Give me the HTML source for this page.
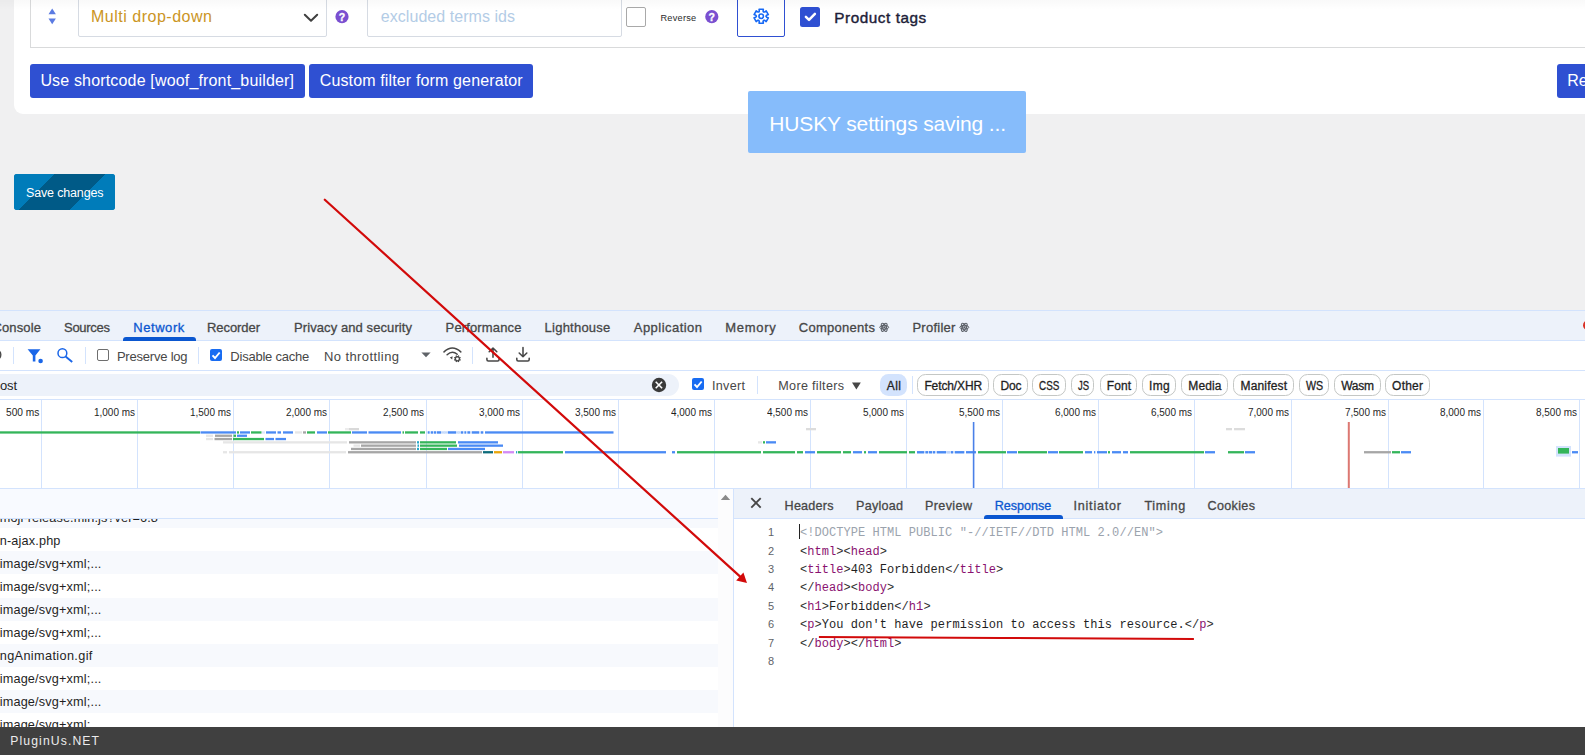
<!DOCTYPE html>
<html lang="en"><head><meta charset="utf-8"><title>HUSKY settings - DevTools</title>
<style>
*{box-sizing:border-box;margin:0;padding:0}
html,body{width:1585px;height:755px;overflow:hidden;background:#f0f0f1;font-family:"Liberation Sans",sans-serif}
#root{position:relative;width:1585px;height:755px;overflow:hidden;background:#f0f0f1}
.a{position:absolute}
.t{position:absolute;white-space:pre;display:block}
.card{left:14px;top:-20px;width:1600px;height:134px;background:#fff;border-radius:0 0 0 9px}
.ibox{left:30px;top:-20px;width:1600px;height:68px;border:1px solid #d9dadb;background:#fff}
.sel{left:78px;top:-10px;width:249px;height:47px;border:1px solid #d6dbe3;border-radius:2px;background:#fff}
.inp{left:367px;top:-10px;width:255px;height:47px;border:1px solid #d6dbe3;border-radius:2px;background:#fff}
.cb0{left:626px;top:7px;width:20px;height:20px;border:1px solid #a9a9a9;border-radius:2px;background:#fff}
.gearb{left:737px;top:-10px;width:48px;height:47px;border:1px solid #2f50d2;border-radius:2px;background:#fff}
.cb1{left:800px;top:7px;width:20px;height:20px;border-radius:2.5px;background:#2f50d2}
.btn{background:#2f50d2;border-radius:3px;top:64px;height:34px}
.toast{left:748px;top:91px;width:278px;height:62px;background:#86bcfb;border-radius:2px}
.save{left:14px;top:174px;width:101px;height:36px;border-radius:3px;overflow:hidden;background:#007cba}
/* devtools */
.dt{left:0;top:310px;width:1585px;height:417px;background:#fff}
.hl{background:#d3e3fd;height:1px;left:0;width:1585px}
.vl{background:#d3e3fd;width:1px}
.tabbar{left:0;top:311px;width:1585px;height:29px;background:#edf2fa}
.frow{left:-12px;top:374px;width:691px;height:22px;background:#edf2fa;border-radius:11px}
.pill{top:374.2px;height:21.6px;border:1px solid #c4c7c5;border-radius:8.5px;background:#fff}
.pillall{left:880.2px;top:374.2px;width:26.5px;height:21.6px;border-radius:8.5px;background:#d3e3fd}
.dcb{width:12px;height:12px;border-radius:2px}
.dcb.off{border:1px solid #6e6e6e;background:#fff}
.dcb.on{background:#186cf2}
.row{left:0;width:718px;height:23px}
.alt{background:#f7f9fd}
.bottom{left:0;top:727px;width:1585px;height:28px;background:#404040;z-index:8}
svg{position:absolute;overflow:visible}

</style></head>
<body>
<div id="root">
<!-- ===== page ===== -->
<div class="a card"></div>
<div class="a ibox"></div>
<div class="a sel"></div>
<div class="a inp"></div>
<div class="a cb0"></div>
<div class="a gearb"></div>
<div class="a cb1"></div>
<div class="a btn" style="left:30px;width:275px"></div>
<div class="a btn" style="left:309px;width:224px"></div>
<div class="a btn" style="left:1557px;width:40px"></div>
<div class="a" style="left:0;top:0;width:1585px;height:10px;background:linear-gradient(to bottom,rgba(0,0,0,.024),rgba(0,0,0,0))"></div>
<div class="a toast"></div>
<div class="a save"><div class="a" style="left:-14px;top:-4px;width:130px;height:44px;background:linear-gradient(135deg,#007cba 0,#007cba 33.4%,#005a87 33.4%,#005a87 63%,#007cba 63%)"></div></div>
<svg class="a" style="left:0;top:0" width="1585" height="120" viewBox="0 0 1585 120">
  <!-- sort arrows -->
  <path d="M48.5 14.2 L52.2 8.5 L55.9 14.2 Z" fill="#5b7be2"/>
  <path d="M48.5 18.4 L52.2 24.2 L55.9 18.4 Z" fill="#5b7be2"/>
  <!-- select chevron -->
  <path d="M304.8 14.7 L311 20.8 L317.2 14.7" fill="none" stroke="#404040" stroke-width="2" stroke-linecap="round" stroke-linejoin="round"/>
  <!-- help icons -->
  <g id="q1"><circle cx="342" cy="16.7" r="6.6" fill="#7a4fd0"/><text x="342" y="20.6" font-family="Liberation Sans, sans-serif" font-weight="700" font-size="10.5" fill="#fff" stroke="#fff" stroke-width=".35" text-anchor="middle">?</text></g>
  <g id="q2"><circle cx="711.8" cy="16.7" r="6.6" fill="#7a4fd0"/><text x="711.8" y="20.6" font-family="Liberation Sans, sans-serif" font-weight="700" font-size="10.5" fill="#fff" stroke="#fff" stroke-width=".35" text-anchor="middle">?</text></g>
  <!-- gear -->
  <g fill="none" stroke="#1668f5" stroke-width="1.6" stroke-linejoin="round">
    <circle cx="761.2" cy="16.2" r="2.25"/>
    <path d="M763.60 12.04 L763.08 11.03 L763.33 9.22 L759.07 9.22 L759.32 11.03 L758.80 12.04 L757.66 11.99 L756.22 10.86 L754.09 14.56 L755.78 15.24 L756.40 16.20 L755.78 17.16 L754.09 17.84 L756.22 21.54 L757.66 20.41 L758.80 20.36 L759.32 21.37 L759.07 23.18 L763.33 23.18 L763.08 21.37 L763.60 20.36 L764.74 20.41 L766.18 21.54 L768.31 17.84 L766.62 17.16 L766.00 16.20 L766.62 15.24 L768.31 14.56 L766.18 10.86 L764.74 11.99 Z"/>
  </g>
  <!-- check -->
  <path d="M805.9 16.9 L809 19.9 L814.9 13.9" fill="none" stroke="#fff" stroke-width="2.5" stroke-linecap="round" stroke-linejoin="round"/>
</svg>

<!-- ===== devtools ===== -->
<div class="a dt"></div>
<div class="a hl" style="top:310px"></div>
<div class="a tabbar"></div>
<div class="a hl" style="top:340px"></div>
<div class="a" style="left:123px;top:337px;width:73px;height:3.6px;background:#0b57d0;border-radius:3px 3px 0 0"></div>
<div class="a hl" style="top:370px"></div>
<div class="a frow"></div>
<div class="a hl" style="top:398.6px"></div>
<!-- toolbar separators -->
<div class="a vl" style="left:13px;top:347px;height:17px"></div>
<div class="a vl" style="left:85px;top:347px;height:17px"></div>
<div class="a vl" style="left:198px;top:347px;height:17px"></div>
<div class="a vl" style="left:472px;top:347px;height:17px"></div>
<div class="a vl" style="left:757px;top:376px;height:18px"></div>
<div class="a vl" style="left:912px;top:376px;height:18px"></div>
<div class="a dcb off" style="left:97.3px;top:349.3px"></div>
<div class="a dcb on" style="left:210px;top:349.3px"></div>
<div class="a dcb on" style="left:692px;top:378.3px"></div>
<div class="a pillall"></div>
<div class="a pill" style="left:916.8px;width:71.9px"></div>
<div class="a pill" style="left:993.3px;width:34.3px"></div>
<div class="a pill" style="left:1032.2px;width:33.5px"></div>
<div class="a pill" style="left:1071.4px;width:22.9px"></div>
<div class="a pill" style="left:1100.2px;width:37.2px"></div>
<div class="a pill" style="left:1142.1px;width:34.4px"></div>
<div class="a pill" style="left:1181.2px;width:47.2px"></div>
<div class="a pill" style="left:1233.3px;width:60.4px"></div>
<div class="a pill" style="left:1299.2px;width:29.9px"></div>
<div class="a pill" style="left:1334px;width:46.7px"></div>
<div class="a pill" style="left:1385.2px;width:44.6px"></div>

<svg class="a" style="left:0;top:300px" width="1585" height="120" viewBox="0 300 1585 120">
  <!-- partial clear icon -->
  <circle cx="-4.6" cy="354.7" r="5.4" fill="none" stroke="#474747" stroke-width="1.4"/>
  <!-- filter funnel -->
  <path d="M27.6 349.2 H40.4 L35.4 355.6 V361.4 H32.8 V355.6 Z" fill="#1a66e8"/>
  <circle cx="40.6" cy="361" r="2.3" fill="#1a66e8"/>
  <!-- search -->
  <circle cx="62.4" cy="353.2" r="4.4" fill="none" stroke="#1a66e8" stroke-width="1.5"/>
  <path d="M65.6 356.5 L72.2 362" stroke="#1a66e8" stroke-width="1.9" fill="none"/>
  <!-- checks -->
  <path d="M212.5 355.4 L215 358 L219.7 352.5" fill="none" stroke="#fff" stroke-width="1.9"/>
  <path d="M694.5 384.4 L697 387 L701.7 381.5" fill="none" stroke="#fff" stroke-width="1.9"/>
  <!-- dropdown arrow -->
  <path d="M421.4 352.6 H430.6 L426 357.3 Z" fill="#5f6368"/>
  <!-- wifi gear -->
  <g fill="none" stroke="#474747" stroke-width="1.5" stroke-linecap="round">
    <path d="M444 351.9 Q452.3 344 460.8 351.9"/>
    <path d="M447.1 354.8 Q452.2 349.8 457.2 354.3"/>
  </g>
  <path d="M449.8 357.4 L452.6 356.2 L452.2 359.6 Z" fill="#474747"/>
  <circle cx="457.4" cy="358.8" r="2.05" fill="none" stroke="#474747" stroke-width="1.3"/>
  <path d="M459.43 359.64 L460.63 360.14 M458.24 360.83 L458.74 362.03 M456.56 360.83 L456.06 362.03 M455.37 359.64 L454.17 360.14 M455.37 357.96 L454.17 357.46 M456.56 356.77 L456.06 355.57 M458.24 356.77 L458.74 355.57 M459.43 357.96 L460.63 357.46 " stroke="#474747" stroke-width="1.25" fill="none"/>
  <!-- upload / download -->
  <g fill="none" stroke="#474747" stroke-width="1.55" stroke-linecap="round" stroke-linejoin="round">
    <path d="M493 357.2 V348 M489.2 351.8 L493 348 L496.8 351.8"/>
    <path d="M486.9 358.3 V359.6 Q486.9 361 488.3 361 H497.7 Q499.1 361 499.1 359.6 V358.3"/>
    <path d="M523 347.6 V356.8 M519.2 353 L523 356.8 L526.8 353"/>
    <path d="M516.8 358.3 V359.6 Q516.8 361 518.2 361 H527.8 Q529.2 361 529.2 359.6 V358.3"/>
  </g>
  <!-- clear filter -->
  <circle cx="659" cy="385" r="7.2" fill="#3a3a3a"/>
  <path d="M655.7 381.8 L662.1 388.2 M662.1 381.8 L655.7 388.2" stroke="#fff" stroke-width="1.6"/>
  <!-- more filters arrow -->
  <path d="M852 382.6 H860.8 L856.4 389.4 Z" fill="#474747"/>
  <!-- react icons -->
  <g fill="none" stroke="#5a5f66" stroke-width="1">
    <g transform="translate(884.2,327.3)"><circle r="4.2" fill="#c9ced8" stroke="none" opacity=".55"/><ellipse rx="4.5" ry="1.9"/><ellipse rx="4.5" ry="1.9" transform="rotate(60)"/><ellipse rx="4.5" ry="1.9" transform="rotate(120)"/><circle r="1" fill="#5a5f66" stroke="none"/></g>
    <g transform="translate(964.3,327.3)"><circle r="4.2" fill="#c9ced8" stroke="none" opacity=".55"/><ellipse rx="4.5" ry="1.9"/><ellipse rx="4.5" ry="1.9" transform="rotate(60)"/><ellipse rx="4.5" ry="1.9" transform="rotate(120)"/><circle r="1" fill="#5a5f66" stroke="none"/></g>
  </g>
  <!-- red error partial -->
  <circle cx="1588" cy="325.2" r="5" fill="#d93025"/>
</svg>

<!-- timeline overview -->
<div class="a" style="left:0;top:399.6px;width:1585px;height:88.4px;background:#fff"></div>
<div class="a vl" style="left:41px;top:399.6px;height:88.4px"></div>
<div class="a vl" style="left:137px;top:399.6px;height:88.4px"></div>
<div class="a vl" style="left:233px;top:399.6px;height:88.4px"></div>
<div class="a vl" style="left:329px;top:399.6px;height:88.4px"></div>
<div class="a vl" style="left:426px;top:399.6px;height:88.4px"></div>
<div class="a vl" style="left:522px;top:399.6px;height:88.4px"></div>
<div class="a vl" style="left:618px;top:399.6px;height:88.4px"></div>
<div class="a vl" style="left:714px;top:399.6px;height:88.4px"></div>
<div class="a vl" style="left:810px;top:399.6px;height:88.4px"></div>
<div class="a vl" style="left:906px;top:399.6px;height:88.4px"></div>
<div class="a vl" style="left:1002px;top:399.6px;height:88.4px"></div>
<div class="a vl" style="left:1098px;top:399.6px;height:88.4px"></div>
<div class="a vl" style="left:1194px;top:399.6px;height:88.4px"></div>
<div class="a vl" style="left:1291px;top:399.6px;height:88.4px"></div>
<div class="a vl" style="left:1388px;top:399.6px;height:88.4px"></div>
<div class="a vl" style="left:1483px;top:399.6px;height:88.4px"></div>
<div class="a vl" style="left:1579px;top:399.6px;height:88.4px"></div>
<div class="a hl" style="top:488px"></div>
<svg class="a" style="left:0;top:399px" width="1585" height="90" viewBox="0 399 1585 90" shape-rendering="auto">
<rect x="345" y="428.0" width="4.0" height="2.3" fill="#ececec"/><rect x="349" y="428.0" width="10.0" height="2.3" fill="#d9d9d9"/><rect x="806" y="428.0" width="10.0" height="2.3" fill="#dcdcdc"/><rect x="1226" y="428.0" width="6.0" height="2.3" fill="#dcdcdc"/><rect x="1234" y="428.0" width="11.0" height="2.3" fill="#dcdcdc"/><rect x="426" y="431.3" width="58.0" height="2.3" fill="#c4d9fb"/><rect x="-2" y="431.3" width="202.0" height="2.3" fill="#34b55a"/><rect x="200.5" y="431.3" width="35.5" height="2.3" fill="#4a8af4"/><rect x="237" y="431.3" width="2.0" height="2.3" fill="#34b55a"/><rect x="240" y="431.3" width="10.0" height="2.3" fill="#4a8af4"/><rect x="251" y="431.3" width="10.5" height="2.3" fill="#34b55a"/><rect x="262" y="431.3" width="3.0" height="2.3" fill="#dfe8fb"/><rect x="266" y="431.3" width="10.0" height="2.3" fill="#4a8af4"/><rect x="277.5" y="431.3" width="3.5" height="2.3" fill="#4a8af4"/><rect x="283" y="431.3" width="10.0" height="2.3" fill="#4a8af4"/><rect x="295" y="431.3" width="7.0" height="2.3" fill="#e6e6e6"/><rect x="303" y="431.3" width="3.0" height="2.3" fill="#a6a6a6"/><rect x="307" y="431.3" width="8.0" height="2.3" fill="#34b55a"/><rect x="317" y="431.3" width="10.0" height="2.3" fill="#4a8af4"/><rect x="328" y="431.3" width="23.0" height="2.3" fill="#34b55a"/><rect x="352" y="431.3" width="15.0" height="2.3" fill="#4a8af4"/><rect x="368.5" y="431.3" width="32.5" height="2.3" fill="#4a8af4"/><rect x="402.5" y="431.3" width="1.5" height="2.3" fill="#34b55a"/><rect x="405" y="431.3" width="13.0" height="2.3" fill="#34b55a"/><rect x="420" y="431.3" width="5.0" height="2.3" fill="#34b55a"/><rect x="428" y="431.3" width="1.5" height="2.3" fill="#4a8af4"/><rect x="431" y="431.3" width="2.0" height="2.3" fill="#4a8af4"/><rect x="434" y="431.3" width="2.0" height="2.3" fill="#4a8af4"/><rect x="437" y="431.3" width="4.0" height="2.3" fill="#4a8af4"/><rect x="444" y="431.3" width="1.0" height="2.3" fill="#cfe0fb"/><rect x="448" y="431.3" width="8.0" height="2.3" fill="#4a8af4"/><rect x="458" y="431.3" width="1.0" height="2.3" fill="#cfe0fb"/><rect x="461" y="431.3" width="2.0" height="2.3" fill="#4a8af4"/><rect x="464.5" y="431.3" width="1.5" height="2.3" fill="#4a8af4"/><rect x="467.5" y="431.3" width="2.5" height="2.3" fill="#4a8af4"/><rect x="472" y="431.3" width="7.0" height="2.3" fill="#4a8af4"/><rect x="481" y="431.3" width="2.0" height="2.3" fill="#4a8af4"/><rect x="485" y="431.3" width="128.5" height="2.3" fill="#4a8af4"/><rect x="206" y="434.6" width="7.0" height="2.3" fill="#e6e6e6"/><rect x="215" y="434.6" width="17.0" height="2.3" fill="#a6a6a6"/><rect x="233.5" y="434.6" width="2.5" height="2.3" fill="#34b55a"/><rect x="237" y="434.6" width="10.0" height="2.3" fill="#4a8af4"/><rect x="206" y="437.9" width="7.0" height="2.3" fill="#e6e6e6"/><rect x="214.5" y="437.9" width="17.5" height="2.3" fill="#a6a6a6"/><rect x="233" y="437.9" width="31.0" height="2.3" fill="#34b55a"/><rect x="265.5" y="437.9" width="8.5" height="2.3" fill="#4a8af4"/><rect x="275.5" y="437.9" width="10.5" height="2.3" fill="#4a8af4"/><rect x="223" y="441.2" width="124.0" height="2.3" fill="#e6e6e6"/><rect x="349" y="441.2" width="67.0" height="2.3" fill="#a6a6a6"/><rect x="417" y="441.2" width="2.0" height="2.3" fill="#25a7c9"/><rect x="420" y="441.2" width="36.0" height="2.3" fill="#34b55a"/><rect x="458" y="441.2" width="40.0" height="2.3" fill="#4a8af4"/><rect x="758" y="441.2" width="4.0" height="2.3" fill="#e6e6e6"/><rect x="763" y="441.2" width="2.0" height="2.3" fill="#34b55a"/><rect x="766" y="441.2" width="10.0" height="2.3" fill="#4a8af4"/><rect x="353.5" y="444.5" width="6.5" height="2.3" fill="#e6e6e6"/><rect x="361" y="444.5" width="55.0" height="2.3" fill="#a6a6a6"/><rect x="417.5" y="444.5" width="1.5" height="2.3" fill="#25a7c9"/><rect x="420" y="444.5" width="37.0" height="2.3" fill="#34b55a"/><rect x="459" y="444.5" width="44.0" height="2.3" fill="#4a8af4"/><rect x="351" y="447.8" width="65.0" height="2.3" fill="#a6a6a6"/><rect x="417" y="447.8" width="2.0" height="2.3" fill="#25a7c9"/><rect x="420" y="447.8" width="27.0" height="2.3" fill="#34b55a"/><rect x="448" y="447.8" width="37.0" height="2.3" fill="#4a8af4"/><rect x="917" y="451.1" width="48.0" height="2.3" fill="#c4d9fb"/><rect x="223" y="451.1" width="4.0" height="2.3" fill="#e6e6e6"/><rect x="229" y="451.1" width="117.0" height="2.3" fill="#e6e6e6"/><rect x="348" y="451.1" width="134.0" height="2.3" fill="#a6a6a6"/><rect x="483" y="451.1" width="10.0" height="2.3" fill="#0d6b7a"/><rect x="494" y="451.1" width="8.0" height="2.3" fill="#e8a60c"/><rect x="503" y="451.1" width="11.0" height="2.3" fill="#d38af5"/><rect x="516" y="451.1" width="1.2" height="2.3" fill="#25a7c9"/><rect x="518" y="451.1" width="45.0" height="2.3" fill="#34b55a"/><rect x="565" y="451.1" width="101.0" height="2.3" fill="#4a8af4"/><rect x="672" y="451.1" width="3.0" height="2.3" fill="#4a8af4"/><rect x="677" y="451.1" width="84.0" height="2.3" fill="#34b55a"/><rect x="763" y="451.1" width="32.0" height="2.3" fill="#34b55a"/><rect x="797" y="451.1" width="6.0" height="2.3" fill="#34b55a"/><rect x="805" y="451.1" width="10.0" height="2.3" fill="#4a8af4"/><rect x="817" y="451.1" width="24.0" height="2.3" fill="#34b55a"/><rect x="843" y="451.1" width="8.0" height="2.3" fill="#34b55a"/><rect x="853" y="451.1" width="9.0" height="2.3" fill="#4a8af4"/><rect x="864" y="451.1" width="2.0" height="2.3" fill="#34b55a"/><rect x="868" y="451.1" width="9.0" height="2.3" fill="#4a8af4"/><rect x="879" y="451.1" width="28.0" height="2.3" fill="#34b55a"/><rect x="909" y="451.1" width="6.0" height="2.3" fill="#34b55a"/><rect x="917" y="451.1" width="7.0" height="2.3" fill="#4a8af4"/><rect x="925.5" y="451.1" width="2.5" height="2.3" fill="#4a8af4"/><rect x="929" y="451.1" width="3.0" height="2.3" fill="#4a8af4"/><rect x="933" y="451.1" width="2.0" height="2.3" fill="#4a8af4"/><rect x="937" y="451.1" width="9.0" height="2.3" fill="#4a8af4"/><rect x="947" y="451.1" width="3.0" height="2.3" fill="#bcd3fb"/><rect x="951" y="451.1" width="2.0" height="2.3" fill="#4a8af4"/><rect x="955" y="451.1" width="9.0" height="2.3" fill="#4a8af4"/><rect x="966" y="451.1" width="10.0" height="2.3" fill="#4a8af4"/><rect x="978" y="451.1" width="28.0" height="2.3" fill="#34b55a"/><rect x="1007" y="451.1" width="10.0" height="2.3" fill="#4a8af4"/><rect x="1018" y="451.1" width="29.0" height="2.3" fill="#34b55a"/><rect x="1048" y="451.1" width="10.0" height="2.3" fill="#4a8af4"/><rect x="1059" y="451.1" width="24.0" height="2.3" fill="#34b55a"/><rect x="1085" y="451.1" width="7.0" height="2.3" fill="#4a8af4"/><rect x="1094" y="451.1" width="1.3" height="2.3" fill="#4a8af4"/><rect x="1097" y="451.1" width="10.0" height="2.3" fill="#4a8af4"/><rect x="1108" y="451.1" width="2.0" height="2.3" fill="#34b55a"/><rect x="1112" y="451.1" width="9.0" height="2.3" fill="#4a8af4"/><rect x="1123" y="451.1" width="5.0" height="2.3" fill="#4a8af4"/><rect x="1130" y="451.1" width="74.0" height="2.3" fill="#34b55a"/><rect x="1205" y="451.1" width="10.0" height="2.3" fill="#4a8af4"/><rect x="1228" y="451.1" width="16.0" height="2.3" fill="#34b55a"/><rect x="1245" y="451.1" width="10.0" height="2.3" fill="#4a8af4"/><rect x="1364" y="451.1" width="27.0" height="2.3" fill="#a6a6a6"/><rect x="1392" y="451.1" width="8.0" height="2.3" fill="#34b55a"/><rect x="1401" y="451.1" width="10.0" height="2.3" fill="#4a8af4"/><rect x="1572" y="451.1" width="6.0" height="2.3" fill="#4a8af4"/>
<rect x="1556" y="446" width="15" height="10.6" fill="#d3e3fd"/><rect x="1558" y="448" width="11" height="5.6" fill="#34b55a"/>
<rect x="972.8" y="422" width="1.6" height="66" fill="#4a80e8"/><rect x="1347.8" y="422" width="2" height="66" fill="#dc7872"/>
</svg>


<!-- request list -->
<div class="a" style="left:0;top:489px;width:733px;height:238px;background:#fff"></div>
<div class="a row alt" style="top:505.2px;height:23.1px"></div>
<div class="a row alt" style="top:551.4px;height:23.1px"></div>
<div class="a row alt" style="top:597.6px;height:23.1px"></div>
<div class="a row alt" style="top:643.8px;height:23.1px"></div>
<div class="a row alt" style="top:690.0px;height:23.1px"></div>


<div class="a" style="left:0;top:489px;width:718px;height:29px;background:#f8faff;z-index:6"></div>
<div class="a" style="left:718px;top:489px;width:15px;height:238px;background:#fcfcfd;z-index:6"></div>
<div class="a hl" style="top:518px;width:718px;z-index:6"></div>
<svg class="a" style="left:718px;top:489px;z-index:6" width="15" height="20"><path d="M2.8 11 L7.5 5.8 L12.2 11 Z" fill="#8a8a8a"/></svg>
<!-- response panel -->
<div class="a" style="left:734px;top:489px;width:851px;height:29px;background:#edf2fa"></div>
<div class="a hl" style="top:518px;left:734px;width:851px"></div>
<div class="a vl" style="left:733px;top:489px;height:238px"></div>
<div class="a" style="left:983.5px;top:515px;width:79px;height:3.6px;background:#0b57d0;border-radius:3px 3px 0 0"></div>
<svg class="a" style="left:740px;top:490px" width="40" height="30"><path d="M11.3 8.2 L20.7 17.6 M20.7 8.2 L11.3 17.6" stroke="#474747" stroke-width="1.9" fill="none"/></svg>
<div class="a" style="left:799px;top:524px;width:1px;height:15px;background:#222"></div>

<span class="t" style="left:91.00px;top:5.20px;font:400 16px/23px 'Liberation Sans', sans-serif;color:#cb9524;letter-spacing:0.512px;">Multi drop-down</span>
<span class="t" style="left:380.80px;top:5.20px;font:400 16px/23px 'Liberation Sans', sans-serif;color:#b3cce6;letter-spacing:0.048px;">excluded terms ids</span>
<span class="t" style="left:660.40px;top:11.00px;font:400 9.2px/14px 'Liberation Sans', sans-serif;color:#2b2b2b;letter-spacing:0.264px;">Reverse</span>
<span class="t" style="left:834.30px;top:7.00px;font:400 15.3px/22px 'Liberation Sans', sans-serif;color:#1d1d38;letter-spacing:0.546px;-webkit-text-stroke:.4px #1d1d38;">Product tags</span>
<span class="t" style="left:40.40px;top:69.00px;font:400 16px/23px 'Liberation Sans', sans-serif;color:#fff;letter-spacing:0.165px;">Use shortcode [woof_front_builder]</span>
<span class="t" style="left:319.70px;top:69.00px;font:400 16px/23px 'Liberation Sans', sans-serif;color:#fff;letter-spacing:0.141px;">Custom filter form generator</span>
<span class="t" style="left:1567.30px;top:69.00px;font:400 16px/23px 'Liberation Sans', sans-serif;color:#fff;">Re</span>
<span class="t" style="left:769.30px;top:109.00px;font:400 21px/29px 'Liberation Sans', sans-serif;color:#fff;letter-spacing:-0.140px;">HUSKY settings saving ...</span>
<span class="t" style="left:26.00px;top:183.60px;font:400 12.5px/18px 'Liberation Sans', sans-serif;color:#fff;letter-spacing:-0.158px;">Save changes</span>
<span class="t" style="left:-7.60px;top:318.10px;font:400 13px/19px 'Liberation Sans', sans-serif;color:#474747;letter-spacing:0.149px;-webkit-text-stroke:.3px currentColor;">Console</span>
<span class="t" style="left:64.00px;top:318.10px;font:400 13px/19px 'Liberation Sans', sans-serif;color:#474747;letter-spacing:-0.284px;-webkit-text-stroke:.3px currentColor;">Sources</span>
<span class="t" style="left:133.30px;top:318.10px;font:400 13px/19px 'Liberation Sans', sans-serif;color:#0b57d0;letter-spacing:0.552px;-webkit-text-stroke:.3px currentColor;">Network</span>
<span class="t" style="left:207.00px;top:318.10px;font:400 13px/19px 'Liberation Sans', sans-serif;color:#474747;letter-spacing:-0.067px;-webkit-text-stroke:.3px currentColor;">Recorder</span>
<span class="t" style="left:294.00px;top:318.10px;font:400 13px/19px 'Liberation Sans', sans-serif;color:#474747;letter-spacing:0.088px;-webkit-text-stroke:.3px currentColor;">Privacy and security</span>
<span class="t" style="left:445.60px;top:318.10px;font:400 13px/19px 'Liberation Sans', sans-serif;color:#474747;letter-spacing:0.138px;-webkit-text-stroke:.3px currentColor;">Performance</span>
<span class="t" style="left:544.60px;top:318.10px;font:400 13px/19px 'Liberation Sans', sans-serif;color:#474747;letter-spacing:0.231px;-webkit-text-stroke:.3px currentColor;">Lighthouse</span>
<span class="t" style="left:633.80px;top:318.10px;font:400 13px/19px 'Liberation Sans', sans-serif;color:#474747;letter-spacing:0.459px;-webkit-text-stroke:.3px currentColor;">Application</span>
<span class="t" style="left:725.30px;top:318.10px;font:400 13px/19px 'Liberation Sans', sans-serif;color:#474747;letter-spacing:0.709px;-webkit-text-stroke:.3px currentColor;">Memory</span>
<span class="t" style="left:798.80px;top:318.10px;font:400 13px/19px 'Liberation Sans', sans-serif;color:#474747;letter-spacing:0.276px;-webkit-text-stroke:.3px currentColor;">Components</span>
<span class="t" style="left:912.40px;top:318.10px;font:400 13px/19px 'Liberation Sans', sans-serif;color:#474747;letter-spacing:0.259px;-webkit-text-stroke:.3px currentColor;">Profiler</span>
<span class="t" style="left:116.90px;top:347.00px;font:400 13px/19px 'Liberation Sans', sans-serif;color:#474747;letter-spacing:-0.208px;">Preserve log</span>
<span class="t" style="left:230.30px;top:347.00px;font:400 13px/19px 'Liberation Sans', sans-serif;color:#474747;letter-spacing:-0.221px;">Disable cache</span>
<span class="t" style="left:324.00px;top:347.00px;font:400 13px/19px 'Liberation Sans', sans-serif;color:#474747;letter-spacing:0.409px;">No throttling</span>
<span class="t" style="left:0.00px;top:375.60px;font:400 13px/19px 'Liberation Sans', sans-serif;color:#1f1f1f;letter-spacing:-0.172px;">ost</span>
<span class="t" style="left:712.00px;top:377.00px;font:400 12.6px/18px 'Liberation Sans', sans-serif;color:#474747;letter-spacing:0.300px;">Invert</span>
<span class="t" style="left:778.30px;top:377.00px;font:400 12.6px/18px 'Liberation Sans', sans-serif;color:#474747;letter-spacing:0.311px;">More filters</span>
<span class="t" style="left:886.80px;top:377.00px;font:400 12px/18px 'Liberation Sans', sans-serif;color:#1f1f1f;letter-spacing:0.378px;-webkit-text-stroke:.3px currentColor;">All</span>
<span class="t" style="left:924.40px;top:377.00px;font:400 12px/18px 'Liberation Sans', sans-serif;color:#1f1f1f;letter-spacing:-0.111px;-webkit-text-stroke:.3px currentColor;">Fetch/XHR</span>
<span class="t" style="left:1000.40px;top:377.00px;font:400 12px/18px 'Liberation Sans', sans-serif;color:#1f1f1f;letter-spacing:-0.172px;-webkit-text-stroke:.3px currentColor;">Doc</span>
<span class="t" style="left:1039.20px;top:377.00px;font:400 12px/18px 'Liberation Sans', sans-serif;color:#1f1f1f;letter-spacing:0.000px;-webkit-text-stroke:.3px currentColor;transform:scaleX(0.8223);transform-origin:0 0;">CSS</span>
<span class="t" style="left:1077.60px;top:377.00px;font:400 12px/18px 'Liberation Sans', sans-serif;color:#1f1f1f;letter-spacing:0.000px;-webkit-text-stroke:.3px currentColor;transform:scaleX(0.7920);transform-origin:0 0;">JS</span>
<span class="t" style="left:1106.70px;top:377.00px;font:400 12px/18px 'Liberation Sans', sans-serif;color:#1f1f1f;letter-spacing:0.128px;-webkit-text-stroke:.3px currentColor;">Font</span>
<span class="t" style="left:1149.00px;top:377.00px;font:400 12px/18px 'Liberation Sans', sans-serif;color:#1f1f1f;letter-spacing:0.342px;-webkit-text-stroke:.3px currentColor;">Img</span>
<span class="t" style="left:1188.30px;top:377.00px;font:400 12px/18px 'Liberation Sans', sans-serif;color:#1f1f1f;letter-spacing:0.128px;-webkit-text-stroke:.3px currentColor;">Media</span>
<span class="t" style="left:1240.50px;top:377.00px;font:400 12px/18px 'Liberation Sans', sans-serif;color:#1f1f1f;letter-spacing:0.163px;-webkit-text-stroke:.3px currentColor;">Manifest</span>
<span class="t" style="left:1306.00px;top:377.00px;font:400 12px/18px 'Liberation Sans', sans-serif;color:#1f1f1f;letter-spacing:0.000px;-webkit-text-stroke:.3px currentColor;transform:scaleX(0.8892);transform-origin:0 0;">WS</span>
<span class="t" style="left:1341.20px;top:377.00px;font:400 12px/18px 'Liberation Sans', sans-serif;color:#1f1f1f;letter-spacing:-0.221px;-webkit-text-stroke:.3px currentColor;">Wasm</span>
<span class="t" style="left:1392.10px;top:377.00px;font:400 12px/18px 'Liberation Sans', sans-serif;color:#1f1f1f;letter-spacing:0.221px;-webkit-text-stroke:.3px currentColor;">Other</span>
<span class="t" style="left:5.70px;top:404.00px;font:400 11.3px/17px 'Liberation Sans', sans-serif;color:#1f1f1f;letter-spacing:0.000px;transform:scaleX(0.9016);transform-origin:0 0;">500 ms</span>
<span class="t" style="left:94.10px;top:404.00px;font:400 11.3px/17px 'Liberation Sans', sans-serif;color:#1f1f1f;letter-spacing:0.000px;transform:scaleX(0.8823);transform-origin:0 0;">1,000 ms</span>
<span class="t" style="left:190.10px;top:404.00px;font:400 11.3px/17px 'Liberation Sans', sans-serif;color:#1f1f1f;letter-spacing:0.000px;transform:scaleX(0.8823);transform-origin:0 0;">1,500 ms</span>
<span class="t" style="left:286.10px;top:404.00px;font:400 11.3px/17px 'Liberation Sans', sans-serif;color:#1f1f1f;letter-spacing:0.000px;transform:scaleX(0.8823);transform-origin:0 0;">2,000 ms</span>
<span class="t" style="left:383.10px;top:404.00px;font:400 11.3px/17px 'Liberation Sans', sans-serif;color:#1f1f1f;letter-spacing:0.000px;transform:scaleX(0.8823);transform-origin:0 0;">2,500 ms</span>
<span class="t" style="left:479.10px;top:404.00px;font:400 11.3px/17px 'Liberation Sans', sans-serif;color:#1f1f1f;letter-spacing:0.000px;transform:scaleX(0.8823);transform-origin:0 0;">3,000 ms</span>
<span class="t" style="left:575.10px;top:404.00px;font:400 11.3px/17px 'Liberation Sans', sans-serif;color:#1f1f1f;letter-spacing:0.000px;transform:scaleX(0.8823);transform-origin:0 0;">3,500 ms</span>
<span class="t" style="left:671.10px;top:404.00px;font:400 11.3px/17px 'Liberation Sans', sans-serif;color:#1f1f1f;letter-spacing:0.000px;transform:scaleX(0.8823);transform-origin:0 0;">4,000 ms</span>
<span class="t" style="left:767.10px;top:404.00px;font:400 11.3px/17px 'Liberation Sans', sans-serif;color:#1f1f1f;letter-spacing:0.000px;transform:scaleX(0.8823);transform-origin:0 0;">4,500 ms</span>
<span class="t" style="left:863.10px;top:404.00px;font:400 11.3px/17px 'Liberation Sans', sans-serif;color:#1f1f1f;letter-spacing:0.000px;transform:scaleX(0.8823);transform-origin:0 0;">5,000 ms</span>
<span class="t" style="left:959.10px;top:404.00px;font:400 11.3px/17px 'Liberation Sans', sans-serif;color:#1f1f1f;letter-spacing:0.000px;transform:scaleX(0.8823);transform-origin:0 0;">5,500 ms</span>
<span class="t" style="left:1055.10px;top:404.00px;font:400 11.3px/17px 'Liberation Sans', sans-serif;color:#1f1f1f;letter-spacing:0.000px;transform:scaleX(0.8823);transform-origin:0 0;">6,000 ms</span>
<span class="t" style="left:1151.10px;top:404.00px;font:400 11.3px/17px 'Liberation Sans', sans-serif;color:#1f1f1f;letter-spacing:0.000px;transform:scaleX(0.8823);transform-origin:0 0;">6,500 ms</span>
<span class="t" style="left:1248.10px;top:404.00px;font:400 11.3px/17px 'Liberation Sans', sans-serif;color:#1f1f1f;letter-spacing:0.000px;transform:scaleX(0.8823);transform-origin:0 0;">7,000 ms</span>
<span class="t" style="left:1345.10px;top:404.00px;font:400 11.3px/17px 'Liberation Sans', sans-serif;color:#1f1f1f;letter-spacing:0.000px;transform:scaleX(0.8823);transform-origin:0 0;">7,500 ms</span>
<span class="t" style="left:1440.10px;top:404.00px;font:400 11.3px/17px 'Liberation Sans', sans-serif;color:#1f1f1f;letter-spacing:0.000px;transform:scaleX(0.8823);transform-origin:0 0;">8,000 ms</span>
<span class="t" style="left:1536.10px;top:404.00px;font:400 11.3px/17px 'Liberation Sans', sans-serif;color:#1f1f1f;letter-spacing:0.000px;transform:scaleX(0.8823);transform-origin:0 0;">8,500 ms</span>
<span class="t" style="left:-0.30px;top:509.00px;font:400 12.7px/19px 'Liberation Sans', sans-serif;color:#1f1f1f;letter-spacing:0.104px;">mojl-release.min.js?ver=6.8</span>
<span class="t" style="left:-0.30px;top:532.00px;font:400 12.7px/19px 'Liberation Sans', sans-serif;color:#1f1f1f;letter-spacing:0.161px;">n-ajax.php</span>
<span class="t" style="left:-0.30px;top:555.00px;font:400 12.7px/19px 'Liberation Sans', sans-serif;color:#1f1f1f;letter-spacing:0.164px;">image/svg+xml;...</span>
<span class="t" style="left:-0.30px;top:578.00px;font:400 12.7px/19px 'Liberation Sans', sans-serif;color:#1f1f1f;letter-spacing:0.164px;">image/svg+xml;...</span>
<span class="t" style="left:-0.30px;top:601.00px;font:400 12.7px/19px 'Liberation Sans', sans-serif;color:#1f1f1f;letter-spacing:0.164px;">image/svg+xml;...</span>
<span class="t" style="left:-0.30px;top:624.00px;font:400 12.7px/19px 'Liberation Sans', sans-serif;color:#1f1f1f;letter-spacing:0.164px;">image/svg+xml;...</span>
<span class="t" style="left:-0.30px;top:647.00px;font:400 12.7px/19px 'Liberation Sans', sans-serif;color:#1f1f1f;letter-spacing:0.374px;">ngAnimation.gif</span>
<span class="t" style="left:-0.30px;top:670.00px;font:400 12.7px/19px 'Liberation Sans', sans-serif;color:#1f1f1f;letter-spacing:0.164px;">image/svg+xml;...</span>
<span class="t" style="left:-0.30px;top:693.00px;font:400 12.7px/19px 'Liberation Sans', sans-serif;color:#1f1f1f;letter-spacing:0.164px;">image/svg+xml;...</span>
<span class="t" style="left:-0.30px;top:716.00px;font:400 12.7px/19px 'Liberation Sans', sans-serif;color:#1f1f1f;letter-spacing:0.164px;">image/svg+xml;...</span>
<span class="t" style="left:784.60px;top:497.00px;font:400 12.6px/18px 'Liberation Sans', sans-serif;color:#474747;letter-spacing:0.215px;-webkit-text-stroke:.3px currentColor;">Headers</span>
<span class="t" style="left:856.00px;top:497.00px;font:400 12.6px/18px 'Liberation Sans', sans-serif;color:#474747;letter-spacing:0.247px;-webkit-text-stroke:.3px currentColor;">Payload</span>
<span class="t" style="left:925.00px;top:497.00px;font:400 12.6px/18px 'Liberation Sans', sans-serif;color:#474747;letter-spacing:0.367px;-webkit-text-stroke:.3px currentColor;">Preview</span>
<span class="t" style="left:1073.50px;top:497.00px;font:400 12.6px/18px 'Liberation Sans', sans-serif;color:#474747;letter-spacing:0.773px;-webkit-text-stroke:.3px currentColor;">Initiator</span>
<span class="t" style="left:1144.40px;top:497.00px;font:400 12.6px/18px 'Liberation Sans', sans-serif;color:#474747;letter-spacing:0.694px;-webkit-text-stroke:.3px currentColor;">Timing</span>
<span class="t" style="left:1207.50px;top:497.00px;font:400 12.6px/18px 'Liberation Sans', sans-serif;color:#474747;letter-spacing:0.333px;-webkit-text-stroke:.3px currentColor;">Cookies</span>
<span class="t" style="left:994.80px;top:497.00px;font:400 12.6px/18px 'Liberation Sans', sans-serif;color:#0b57d0;letter-spacing:-0.046px;-webkit-text-stroke:.3px currentColor;">Response</span>
<span class="t" style="left:768.10px;top:524.00px;font:400 11px/16px 'Liberation Sans', sans-serif;color:#5f6368;">1</span>
<span class="t" style="left:799.90px;top:524.00px;font:400 12px/18px 'Liberation Mono', monospace;color:#1f1f1f;letter-spacing:0.06px;"><b style="color:#9ba3ad;font-weight:400">&lt;!DOCTYPE HTML PUBLIC "-//IETF//DTD HTML 2.0//EN"&gt;</b></span>
<span class="t" style="left:768.10px;top:543.00px;font:400 11px/16px 'Liberation Sans', sans-serif;color:#5f6368;">2</span>
<span class="t" style="left:799.90px;top:543.00px;font:400 12px/18px 'Liberation Mono', monospace;color:#1f1f1f;letter-spacing:0.06px;"><b style="color:#2e2e2e;font-weight:400">&lt;</b><b style="color:#8a1270;font-weight:400">html</b><b style="color:#2e2e2e;font-weight:400">&gt;&lt;</b><b style="color:#8a1270;font-weight:400">head</b><b style="color:#2e2e2e;font-weight:400">&gt;</b></span>
<span class="t" style="left:768.10px;top:561.00px;font:400 11px/16px 'Liberation Sans', sans-serif;color:#5f6368;">3</span>
<span class="t" style="left:799.90px;top:561.00px;font:400 12px/18px 'Liberation Mono', monospace;color:#1f1f1f;letter-spacing:0.06px;"><b style="color:#2e2e2e;font-weight:400">&lt;</b><b style="color:#8a1270;font-weight:400">title</b><b style="color:#2e2e2e;font-weight:400">&gt;</b>403 Forbidden<b style="color:#2e2e2e;font-weight:400">&lt;/</b><b style="color:#8a1270;font-weight:400">title</b><b style="color:#2e2e2e;font-weight:400">&gt;</b></span>
<span class="t" style="left:768.10px;top:579.00px;font:400 11px/16px 'Liberation Sans', sans-serif;color:#5f6368;">4</span>
<span class="t" style="left:799.90px;top:579.00px;font:400 12px/18px 'Liberation Mono', monospace;color:#1f1f1f;letter-spacing:0.06px;"><b style="color:#2e2e2e;font-weight:400">&lt;/</b><b style="color:#8a1270;font-weight:400">head</b><b style="color:#2e2e2e;font-weight:400">&gt;&lt;</b><b style="color:#8a1270;font-weight:400">body</b><b style="color:#2e2e2e;font-weight:400">&gt;</b></span>
<span class="t" style="left:768.10px;top:598.00px;font:400 11px/16px 'Liberation Sans', sans-serif;color:#5f6368;">5</span>
<span class="t" style="left:799.90px;top:598.00px;font:400 12px/18px 'Liberation Mono', monospace;color:#1f1f1f;letter-spacing:0.06px;"><b style="color:#2e2e2e;font-weight:400">&lt;</b><b style="color:#8a1270;font-weight:400">h1</b><b style="color:#2e2e2e;font-weight:400">&gt;</b>Forbidden<b style="color:#2e2e2e;font-weight:400">&lt;/</b><b style="color:#8a1270;font-weight:400">h1</b><b style="color:#2e2e2e;font-weight:400">&gt;</b></span>
<span class="t" style="left:768.10px;top:616.00px;font:400 11px/16px 'Liberation Sans', sans-serif;color:#5f6368;">6</span>
<span class="t" style="left:799.90px;top:616.00px;font:400 12px/18px 'Liberation Mono', monospace;color:#1f1f1f;letter-spacing:0.06px;"><b style="color:#2e2e2e;font-weight:400">&lt;</b><b style="color:#8a1270;font-weight:400">p</b><b style="color:#2e2e2e;font-weight:400">&gt;</b>You don't have permission to access this resource.<b style="color:#2e2e2e;font-weight:400">&lt;/</b><b style="color:#8a1270;font-weight:400">p</b><b style="color:#2e2e2e;font-weight:400">&gt;</b></span>
<span class="t" style="left:768.10px;top:635.00px;font:400 11px/16px 'Liberation Sans', sans-serif;color:#5f6368;">7</span>
<span class="t" style="left:799.90px;top:635.00px;font:400 12px/18px 'Liberation Mono', monospace;color:#1f1f1f;letter-spacing:0.06px;"><b style="color:#2e2e2e;font-weight:400">&lt;/</b><b style="color:#8a1270;font-weight:400">body</b><b style="color:#2e2e2e;font-weight:400">&gt;&lt;/</b><b style="color:#8a1270;font-weight:400">html</b><b style="color:#2e2e2e;font-weight:400">&gt;</b></span>
<span class="t" style="left:768.10px;top:653.00px;font:400 11px/16px 'Liberation Sans', sans-serif;color:#5f6368;">8</span>
<span class="t" style="left:799.90px;top:653.00px;font:400 12px/18px 'Liberation Mono', monospace;color:#1f1f1f;letter-spacing:0.06px;"></span>
<span class="t" style="left:10.30px;top:731.80px;font:400 12.2px/18px 'Liberation Sans', sans-serif;color:#ececec;letter-spacing:1.105px;z-index:9;">PluginUs.NET</span>

<!-- annotation overlay -->
<svg class="a" style="left:0;top:0;z-index:7" width="1585" height="755" viewBox="0 0 1585 755">
  <path d="M324.8 199.7 L741 577.4" stroke="#d20a0a" stroke-width="2.2" stroke-linecap="round" fill="none"/>
  <path d="M747 583 L743.4 572.6 L736.2 580.6 Z" fill="#d20a0a"/>
  <path d="M818.9 637.1 L1000 637.9 L1193.9 639" stroke="#d20a0a" stroke-width="2" fill="none"/>
</svg>
<div class="a bottom"></div>
</div>

</body></html>
